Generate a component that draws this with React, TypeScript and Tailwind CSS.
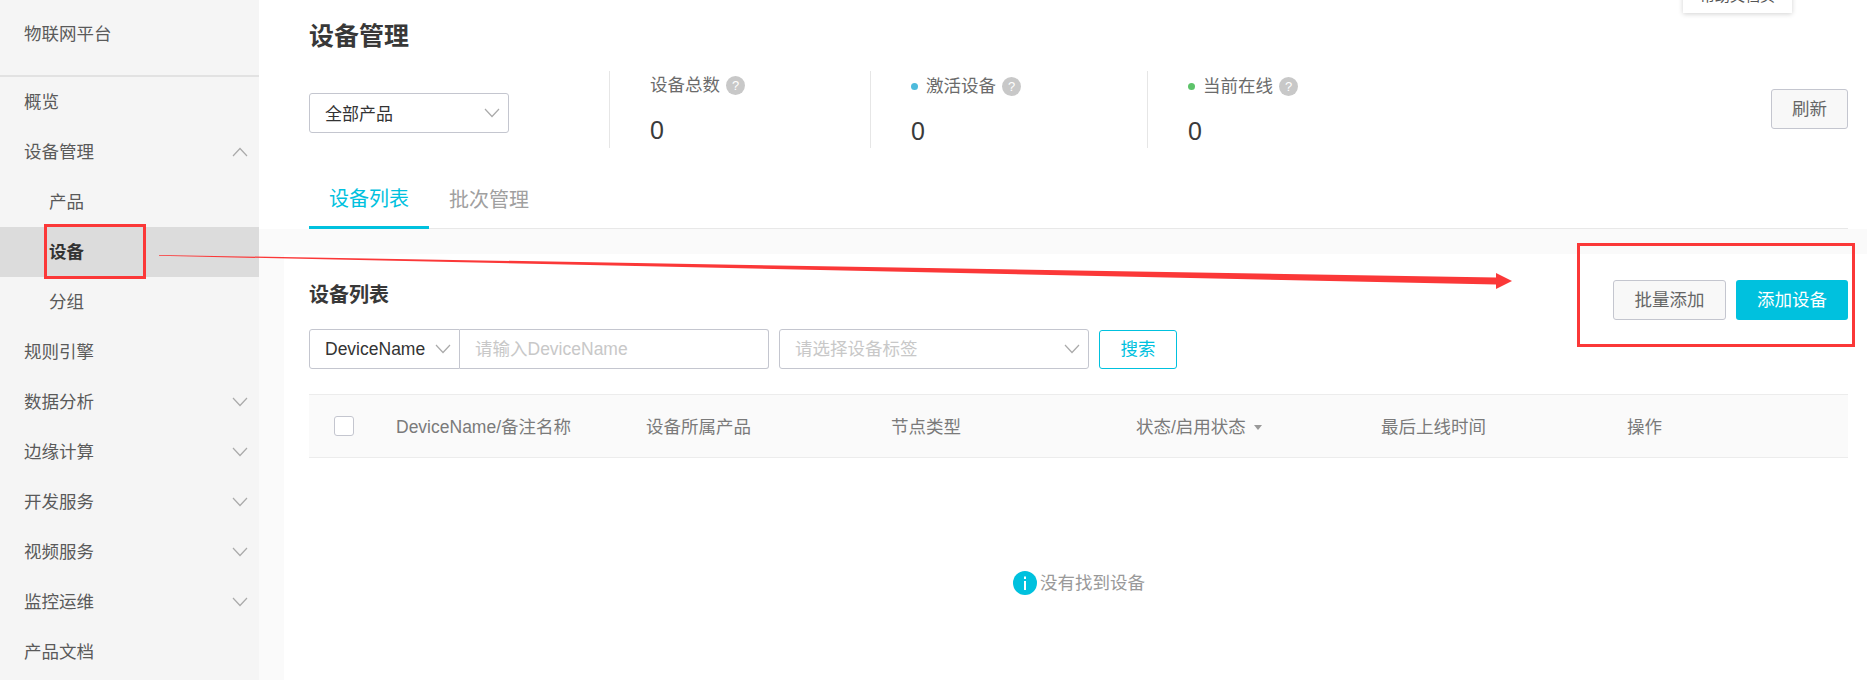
import { useState } from 'react';

type NavItem = {
  label: string;
  arrow?: 'up' | 'down';
  child?: boolean;
  active?: boolean;
};

const navItems: NavItem[] = [
  { label: '概览' },
  { label: '设备管理', arrow: 'up' },
  { label: '产品', child: true },
  { label: '设备', child: true, active: true },
  { label: '分组', child: true },
  { label: '规则引擎' },
  { label: '数据分析', arrow: 'down' },
  { label: '边缘计算', arrow: 'down' },
  { label: '开发服务', arrow: 'down' },
  { label: '视频服务', arrow: 'down' },
  { label: '监控运维', arrow: 'down' },
  { label: '产品文档' },
];

const columns = [
  { label: 'DeviceName/备注名称', width: 'w-[250px]' },
  { label: '设备所属产品', width: 'w-[245px]' },
  { label: '节点类型', width: 'w-[245px]' },
  { label: '状态/启用状态', width: 'w-[245px]', caret: true },
  { label: '最后上线时间', width: 'w-[246px]' },
  { label: '操作', width: 'w-[100px]' },
];

const Chevron = ({ up = false, className = '' }: { up?: boolean; className?: string }) => (
  <svg width="16" height="10" viewBox="0 0 16 10" fill="none" className={className}>
    <path d={up ? 'M1 9L8 1.5L15 9' : 'M1 1L8 8.5L15 1'} stroke="#aaaaaa" strokeWidth="1.2" />
  </svg>
);

const HelpDot = () => (
  <span className="flex h-[19px] w-[19px] items-center justify-center rounded-full bg-[#c8c8c8] text-[13px] leading-none text-white">
    ?
  </span>
);

const Sidebar = () => (
  <aside className="h-[680px] w-[259px] shrink-0 bg-[#f5f5f5] text-[17.5px] text-[#5a5a5a]">
    <div className="h-[77px] border-b-2 border-[#e2e2e2] pl-6 pt-[21px] leading-[26px]">物联网平台</div>
    {navItems.map((item) => (
      <div
        key={item.label + (item.child ? '-child' : '')}
        className={`flex h-[50px] items-center justify-between pr-[11px] ${item.child ? 'pl-[49px]' : 'pl-6'} ${
          item.active ? 'bg-[#dcdcdc] font-bold text-[#333333]' : ''
        }`}
      >
        <span>{item.label}</span>
        {item.arrow && <Chevron up={item.arrow === 'up'} />}
      </div>
    ))}
  </aside>
);

const Stat = ({ label, dot, width, offset }: { label: string; dot?: string; width: string; offset: string }) => (
  <div className={`h-[77px] border-l border-[#e6e6e6] pl-[40px] ${width}`}>
    <div className="h-[43px]">
      <div className={`flex items-center text-[17.5px] leading-[24px] text-[#6b6b6b] ${offset}`}>
        {dot && <span className={`mr-2 h-[7px] w-[7px] rounded-full ${dot}`} />}
        <span className="mr-[6px]">{label}</span>
        <HelpDot />
      </div>
    </div>
    <div className="text-[25px] leading-[28px] text-[#3a3a3a]">0</div>
  </div>
);

const App = () => {
  const [keyword, setKeyword] = useState('');
  const [checked, setChecked] = useState(false);

  return (
    <div className="relative flex h-[680px] w-[1867px] overflow-hidden bg-white [font-family:'Liberation_Sans','Noto_Sans_CJK_SC',sans-serif]">
      <Sidebar />

      <main className="flex min-w-0 flex-1 flex-col bg-[#fafafa]">
        <section className="h-[229px] bg-white pl-[50px] pr-[19px]">
          <h1 className="pt-[23px] text-[25px] font-bold leading-[26px] text-[#383838]">设备管理</h1>

          <div className="mt-[22px] flex">
            <div className="w-[300px]">
              <div className="mt-[22px] flex h-[40px] w-[200px] items-center justify-between rounded-[3px] border border-[#c4c6cf] pl-[15px] pr-[8px] text-[17px] text-[#333333]">
                <span className="pt-[3px]">全部产品</span>
                <Chevron />
              </div>
            </div>
            <Stat label="设备总数" width="w-[261px]" offset="mt-[2px]" />
            <Stat label="激活设备" dot="bg-[#4dbbdc]" width="w-[277px]" offset="mt-[3px]" />
            <Stat label="当前在线" dot="bg-[#5dc36a]" width="w-[277px]" offset="mt-[3px]" />
            <button className="ml-auto mt-[18px] h-[40px] w-[77px] rounded-[3px] border border-[#c4c6cf] bg-[#f8f8f8] text-[17.5px] text-[#666666]">
              刷新
            </button>
          </div>

          <div className="mt-[20px] flex h-[61px] border-b border-[#e8e8e8] text-[20px]">
            <div className="flex h-[61px] w-[120px] items-center justify-center border-b-[3px] border-[#00c1de] pt-[3px] text-[#00c1de]">
              设备列表
            </div>
            <div className="flex h-[61px] w-[120px] items-center justify-center pt-[2px] text-[#a0a0a0]">
              批次管理
            </div>
          </div>
        </section>

        <div className="h-[25px] shrink-0" />

        <section className="ml-[25px] flex-1 bg-white pr-[19px] pl-[25px]">
          <div className="flex justify-between pt-[26px]">
            <h2 className="mb-[10px] self-center text-[20px] font-bold leading-[28px] text-[#383838]">设备列表</h2>
            <div className="flex gap-[10px] text-[17.5px]">
              <button className="h-[40px] w-[113px] rounded-[3px] border border-[#c4c6cf] bg-[#f8f8f8] text-[#666666]">
                批量添加
              </button>
              <button className="h-[40px] w-[112px] rounded-[3px] bg-[#00c1de] text-white">添加设备</button>
            </div>
          </div>

          <div className="mt-[9px] flex h-[40px] text-[17.5px]">
            <div className="flex w-[151px] items-center justify-between rounded-l-[3px] border border-[#c4c6cf] pl-[15px] pr-[8px] text-[#333333]">
              DeviceName
              <Chevron />
            </div>
            <input
              value={keyword}
              onChange={(e) => setKeyword(e.target.value)}
              placeholder="请输入DeviceName"
              className="w-[309px] rounded-r-[3px] border border-l-0 border-[#c4c6cf] pl-[15px] text-[#333333] outline-none placeholder:text-[#c8c8c8]"
            />
            <div className="ml-[10px] flex w-[310px] items-center justify-between rounded-[3px] border border-[#c4c6cf] pl-[15px] pr-[8px] text-[#c8c8c8]">
              请选择设备标签
              <Chevron />
            </div>
            <button className="ml-[10px] mt-[1px] w-[78px] rounded-[3px] border border-[#00c1de] text-[#00c1de]">搜索</button>
          </div>

          <div className="mt-[25px] flex h-[64px] items-center border-y border-[#ececec] bg-[#fafafa] pl-[25px] text-[17.5px] text-[#7a7a7a]">
            <input
              type="checkbox"
              checked={checked}
              onChange={(e) => setChecked(e.target.checked)}
              className="mr-[42px] h-[20px] w-[20px] appearance-none rounded-[3px] border border-[#c4c6cf] bg-white"
            />
            {columns.map((col) => (
              <div key={col.label} className={`flex items-center pt-[2px] ${col.width}`}>
                {col.label}
                {col.caret && <span className="ml-2 mt-[1px] h-0 w-0 border-x-[4px] border-t-[5px] border-x-transparent border-t-[#999999]" />}
              </div>
            ))}
          </div>

          <div className="mt-[112px] flex items-center justify-center pl-[1px] text-[17.5px] text-[#999999]">
            <svg width="24" height="24" viewBox="0 0 24 24" className="mr-[3px]">
              <circle cx="12" cy="12" r="12" fill="#00c1de" />
              <rect x="11" y="10" width="2" height="9" fill="#ffffff" />
              <rect x="11" y="5.5" width="2" height="2.5" fill="#ffffff" />
            </svg>
            没有找到设备
          </div>
        </section>
      </main>

      {/* popup peeking in at the top edge */}
      <div className="absolute left-[1683px] top-[-13px] flex h-[26px] w-[109px] items-center justify-center bg-white pb-[8px] text-[15px] text-[#555555] shadow-[0_1px_5px_rgba(0,0,0,0.18)]">
        帮助文档页
      </div>

      {/* red callouts drawn over the page */}
      <div className="absolute left-[44px] top-[224px] h-[55px] w-[102px] border-[3px] border-[#fb3838]" />
      <div className="absolute left-[1577px] top-[243px] h-[104px] w-[278px] border-[3px] border-[#fb3838]" />
      <svg width="1867" height="680" className="pointer-events-none absolute left-0 top-0">
        <polygon
          points="159,255 1496,277.5 1496,273 1512,281 1496,289 1496,284.5 159,255.8"
          fill="#fb3838"
        />
      </svg>
    </div>
  );
};

export default App;
